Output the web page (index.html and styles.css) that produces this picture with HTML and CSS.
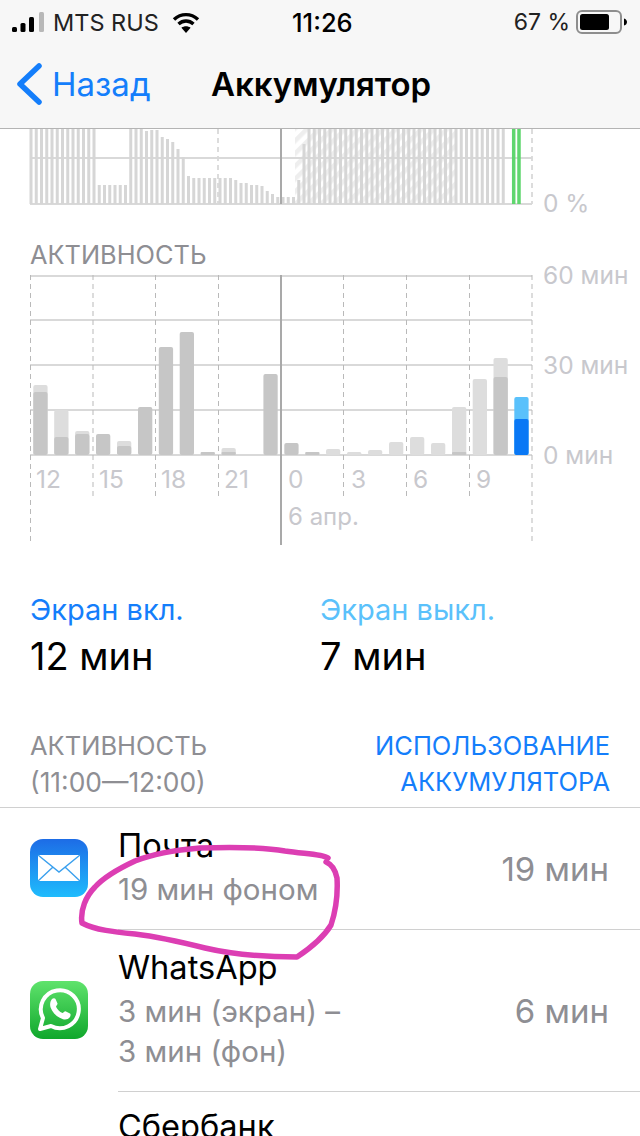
FILE: index.html
```html
<!DOCTYPE html>
<html lang="ru">
<head>
<meta charset="utf-8">
<title>Аккумулятор</title>
<link rel="stylesheet" href="styles.css">
</head>
<body>
<div class="screen">
  <header class="header">
    <div class="status">
      <div class="status-left">
        <svg class="signal" width="33" height="20" viewBox="0 0 33 20"><rect class="sig-on" x="0" y="15" width="5" height="5" rx="1.5"/><rect class="sig-on" x="8.5" y="11" width="5" height="9" rx="1.5"/><rect class="sig-on" x="17" y="5" width="5" height="15" rx="1.5"/><rect class="sig-off" x="27" y="0" width="5" height="20" rx="1.5"/></svg>
        <span class="carrier">MTS RUS</span>
        <svg class="wifi" width="28" height="21" viewBox="0 0 28 21"><path class="wifi-arc" d="M2 7.5C9 1 19 1 26 7.5"/><path class="wifi-arc" d="M6.5 12C11 8 17 8 21.5 12"/><path class="wifi-dot" d="M14 21l-4.6-5.2c2.7-2 6.500-2 9.200 0z"/></svg>
      </div>
      <span class="time">11:26</span>
      <div class="status-right">
        <span class="percent">67 %</span>
        <svg class="battery" width="52" height="24" viewBox="0 0 52 24"><rect class="bat-frame" x="1" y="1" width="44" height="22" rx="5"/><rect class="bat-fill" x="4" y="4" width="29" height="16" rx="2.500"/><path class="bat-nub" d="M48 8.500c2 .5 3 2 3 3.500s-1 3-3 3.500z"/></svg>
      </div>
    </div>
    <nav class="nav">
      <div class="back">
        <svg class="chevron" width="26" height="42" viewBox="0 0 26 42"><path d="M23 3L4 21l19 18"/></svg>
        <span>Назад</span>
      </div>
      <h1 class="nav-title">Аккумулятор</h1>
    </nav>
  </header>

  <svg class="chart chart-battery" width="640" height="91" viewBox="0 129 640 91">
    <defs>
      <pattern id="hatch" width="9" height="9" patternUnits="userSpaceOnUse" patternTransform="rotate(45)"><rect class="hatch-line" width="4.500" height="9"/></pattern>
    </defs>
    <rect x="295" y="129" width="162" height="75" fill="url(#hatch)"/>
    <path class="dash" d="M30.500 129V204M218 129V204M532 129V204"/>
    <path class="grid" d="M30 158H532M30 204H532"/>
    <path class="bars" d="M31 204v-75m5.250 75v-75m5.250 75v-75m5.250 75v-75m5.250 75v-75m5.250 75v-75m5.250 75v-75m5.250 75v-75m5.250 75v-75m5.250 75v-75m5.250 75v-75m5.250 75v-75m5.250 75v-75m5.250 75v-19m5.250 19v-19m5.250 19v-19m5.250 19v-19m5.250 19v-19m5.250 19v-19m5.250 19v-75m5.250 75v-75m5.250 75v-75m5.250 75v-73m5.250 73v-74m5.250 74v-74m5.250 74v-67m5.250 67v-65m5.250 65v-62m5.250 62v-55m5.250 55v-47m5.250 47v-28m5.250 28v-26m5.250 26v-26m5.250 26v-26m5.250 26v-26m5.250 26v-26m5.250 26v-26m5.250 26v-26m5.250 26v-26m5.250 26v-24m5.250 24v-21m5.250 21v-21m5.250 21v-19m5.250 19v-19m5.250 19v-18m5.250 18v-13m5.250 13v-10m5.250 10v-7m5.250 7v-7m5.250 7v-7m5.250 7v-7m5.250 7v-24m5.250 24v-60"/>
    <path class="bars-full" d="M309 204v-75m5.250 75v-75m5.250 75v-75m5.250 75v-75m5.250 75v-75m5.250 75v-75m5.250 75v-75m5.250 75v-75m5.250 75v-75m5.250 75v-75m5.250 75v-75m5.250 75v-75m5.250 75v-75m5.250 75v-75m5.250 75v-75m5.250 75v-75m5.250 75v-75m5.250 75v-75m5.250 75v-75m5.250 75v-75m5.250 75v-75m5.250 75v-75m5.250 75v-75m5.250 75v-75m5.250 75v-75m5.250 75v-75m5.250 75v-75m5.250 75v-75m5.250 75v-75m5.250 75v-75m5.250 75v-75m5.250 75v-75m5.250 75v-75m5.250 75v-75m5.250 75v-75m5.250 75v-75m5.250 75v-75m5.250 75v-75"/>
    <path class="solid" d="M281 129V204"/>
    <path class="bars-green" d="M513.700 204v-75M519 204v-75"/>
    <text class="axis" x="543" y="212">0 %</text>
  </svg>

  <div class="chart-title">АКТИВНОСТЬ</div>

  <svg class="chart chart-activity" width="640" height="271" viewBox="0 275 640 271">
    <path class="grid" d="M30 276H532M30 320H532M30 365H532M30 410H532M30 455H532"/>
    <path class="dash" d="M30.500 275V543M93 275V499M155.500 275V499M218.500 275V499M343.500 275V499M406.500 275V499M469.500 275V499M532 275V543"/>
    <path class="solid" d="M281 275V545"/>
    <g class="light">
      <rect x="33.300" y="385" width="14.300" height="70" rx="2"/>
      <rect x="54.200" y="410" width="14.300" height="45" rx="2"/>
      <rect x="75.100" y="431" width="14.300" height="24" rx="2"/>
      <rect x="117" y="441" width="14.300" height="14" rx="2"/>
      <rect x="221.500" y="448" width="14.300" height="7" rx="2"/>
      <rect x="326" y="449" width="14.300" height="6" rx="2"/>
      <rect x="347" y="452" width="14.300" height="3" rx="1.500"/>
      <rect x="368" y="450" width="14.300" height="5" rx="2"/>
      <rect x="389" y="442" width="14.300" height="13" rx="2"/>
      <rect x="410" y="437" width="14.300" height="18" rx="2"/>
      <rect x="431" y="443" width="14.300" height="12" rx="2"/>
      <rect x="452" y="407" width="14.300" height="48" rx="2"/>
      <rect x="472.700" y="379" width="14.300" height="76" rx="2"/>
      <rect x="493.500" y="358" width="14.300" height="97" rx="2"/>
    </g>
    <g class="dark">
      <rect x="33.300" y="392" width="14.300" height="63" rx="2"/>
      <rect x="54.200" y="437" width="14.300" height="18" rx="2"/>
      <rect x="75.100" y="434" width="14.300" height="21" rx="2"/>
      <rect x="96" y="434" width="14.300" height="21" rx="2"/>
      <rect x="117" y="446" width="14.300" height="9" rx="2"/>
      <rect x="138" y="407" width="14.300" height="48" rx="2"/>
      <rect x="158.800" y="347" width="14.300" height="108" rx="2"/>
      <rect x="179.700" y="332" width="14.300" height="123" rx="2"/>
      <rect x="200.600" y="452" width="14.300" height="3" rx="1"/>
      <rect x="221.500" y="452" width="14.300" height="3" rx="1"/>
      <rect x="263.400" y="374" width="14.300" height="81" rx="2"/>
      <rect x="284.300" y="443" width="14.300" height="12" rx="2"/>
      <rect x="305.200" y="452" width="14.300" height="3" rx="1"/>
      <rect x="452" y="452" width="14.300" height="3" rx="1"/>
      <rect x="493.500" y="377" width="14.300" height="78" rx="2"/>
    </g>
    <rect class="blue-light" x="514.300" y="397" width="14.300" height="58" rx="2"/>
    <rect class="blue-dark" x="514.300" y="419" width="14.300" height="36" rx="2"/>
    <text class="axis" x="543" y="284">60 мин</text>
    <text class="axis" x="543" y="374">30 мин</text>
    <text class="axis" x="543" y="464">0 мин</text>
    <text class="axis" x="36" y="488">12</text>
    <text class="axis" x="99" y="488">15</text>
    <text class="axis" x="161" y="488">18</text>
    <text class="axis" x="224" y="488">21</text>
    <text class="axis" x="288" y="488">0</text>
    <text class="axis" x="351" y="488">3</text>
    <text class="axis" x="413" y="488">6</text>
    <text class="axis" x="476" y="488">9</text>
    <text class="axis axis-small" x="288" y="525">6 апр.</text>
  </svg>

  <section class="stats">
    <div class="stat">
      <div class="stat-label on">Экран вкл.</div>
      <div class="stat-value">12 мин</div>
    </div>
    <div class="stat">
      <div class="stat-label off">Экран выкл.</div>
      <div class="stat-value">7 мин</div>
    </div>
  </section>

  <section class="list-head">
    <div class="list-head-left">АКТИВНОСТЬ<br><span class="range">(11:00—12:00)</span></div>
    <div class="list-head-right">ИСПОЛЬЗОВАНИЕ<br>АККУМУЛЯТОРА</div>
  </section>

  <ul class="apps">
    <li class="app app-mail">
      <svg class="icon" width="58" height="58" viewBox="0 0 58 58">
        <defs><linearGradient id="mailbg" x1="0" y1="0" x2="0" y2="1"><stop offset="0" stop-color="#1d6ce6"/><stop offset="1" stop-color="#1fbcfd"/></linearGradient></defs>
        <rect width="58" height="58" rx="13" fill="url(#mailbg)"/>
        <path class="mail-body" d="M8 16h42v26H8z"/>
        <path class="mail-line" d="M8 16l21 17 21-17M8 42l15-14M50 42L35 28"/>
      </svg>
      <div class="app-body">
        <div class="app-text">
          <div class="app-name">Почта</div>
          <div class="app-sub">19 мин фоном</div>
        </div>
        <div class="app-time">19 мин</div>
      </div>
    </li>
    <li class="app app-whatsapp">
      <svg class="icon" width="58" height="58" viewBox="0 0 58 58">
        <defs><linearGradient id="wabg" x1="0" y1="0" x2="0" y2="1"><stop offset="0" stop-color="#5fe36c"/><stop offset="1" stop-color="#10a72c"/></linearGradient></defs>
        <rect width="58" height="58" rx="13" fill="url(#wabg)"/>
        <path class="wa-ring" d="M10 48l3-11a19 19 0 1 1 8 8z"/>
        <path class="wa-phone" d="M22 18c1-1 3-1 3.500 0l2 4.500c.3.800-1.500 2.500-1.500 3.200 1.500 3 3.500 5 6.500 6.300.8 0 2.200-2 3-1.700l4.500 2.200c1 .5.500 2.500 0 3.500-1.500 2.300-4.500 3-7 2.200-6-1.800-10.500-6.300-12.500-12-.8-3-.3-6 1.500-8.200z"/>
      </svg>
      <div class="app-body">
        <div class="app-text">
          <div class="app-name">WhatsApp</div>
          <div class="app-sub">3 мин (экран) –<br>3 мин (фон)</div>
        </div>
        <div class="app-time">6 мин</div>
      </div>
    </li>
    <li class="app app-sber">
      <div class="icon-space"></div>
      <div class="app-body">
        <div class="app-text">
          <div class="app-name">Сбербанк</div>
        </div>
      </div>
    </li>
  </ul>

  <svg class="scribble" width="640" height="1136" viewBox="0 0 640 1136"><path d="M328 858C322 854 305 854 285 851C262 847 230 847 200 848C175 850 150 855 135 861C120 868 105 876 95 887C86 896 80 910 82 923C95 930 115 932 135 934C160 937 185 943 205 948C235 955 265 957 297 957C312 947 325 935 331 925C336 910 338 895 337 878C335 868 331 864 326 862"/></svg>
</div>
</body>
</html>
```
FILE: styles.css
```css
* { box-sizing: border-box; }
html, body { margin: 0; padding: 0; background: #fff; }
body { font-family: Inter, "Noto Sans", sans-serif; color: #000; }
.screen { position: relative; width: 640px; height: 1136px; overflow: hidden; background: #fff; }

.header { height: 129px; background: #f7f7f7; border-bottom: 1px solid #b4b4b4; }
.status { position: relative; display: flex; align-items: center; justify-content: space-between; height: 44px; padding: 0 12px; font-size: 23.5px; }
.status-left, .status-right { display: flex; align-items: center; }
.carrier { margin-left: 8px; color: #222; }
.wifi { margin-left: 13px; }
.sig-on, .bat-fill, .bat-nub, .wifi-dot { fill: #000; }
.sig-off { fill: #b8b8b8; }
.wifi-arc { fill: none; stroke: #000; stroke-width: 3.4; }
.time { position: absolute; left: 292px; font-size: 25.5px; font-weight: 500; }
.percent { margin-right: 6px; color: #222; font-size: 23px; }
.bat-frame { fill: none; stroke: #8e8e8e; stroke-width: 2; }
.nav { position: relative; display: flex; align-items: center; height: 84px; padding: 0 0 4px 16px; }
.back { display: flex; align-items: center; gap: 10px; color: #147efb; font-size: 33px; }
.chevron path { fill: none; stroke: #147efb; stroke-width: 5.500; stroke-linecap: round; stroke-linejoin: round; }
.nav-title { position: absolute; left: 211px; margin: 0; font-size: 33px; font-weight: 600; }

.chart { display: block; }
.chart-activity { overflow: visible; }
.axis { fill: #c8c8cd; font-size: 24.5px; }
.axis-small { font-size: 24px; }
.grid { fill: none; stroke: #d9d9d9; stroke-width: 2; }
.dash { fill: none; stroke: #b9b9b9; stroke-width: 1; stroke-dasharray: 5 4; }
.solid { fill: none; stroke: #a9a9a9; stroke-width: 2; }
.bars { fill: none; stroke: #d6d6d6; stroke-width: 3; }
.bars-full { fill: none; stroke: #d6d6d6; stroke-width: 3; }
.bars-green { fill: none; stroke: #5fd66e; stroke-width: 3.500; }
.hatch-line { fill: #eeeeee; }
.light rect { fill: #dddddd; }
.dark rect { fill: #c6c6c6; }
.blue-light { fill: #5ac1fb; }
.blue-dark { fill: #0a78f5; }

.chart-title { height: 55px; padding: 20px 0 0 30px; color: #8e8e93; font-size: 25.4px; line-height: 30px; }

.stats { display: flex; height: 182px; padding: 46px 0 0 30px; }
.stat { width: 290px; }
.stat-label { font-size: 29px; line-height: 36px; }
.stat-label.on { color: #147efb; }
.stat-label.off { color: #5ac1fb; }
.stat-value { margin-top: 4px; font-size: 38px; line-height: 48px; }

.list-head { display: flex; justify-content: space-between; height: 79px; padding: 0 30px; font-size: 25.5px; line-height: 36px; }
.list-head-left { color: #8e8e93; }
.range { font-size: 26.4px; }
.list-head-right { color: #147efb; text-align: right; }

.apps { margin: 0; padding: 0; list-style: none; border-top: 1px solid #d0d0d0; }
.app { display: flex; padding-left: 30px; }
.icon { margin-bottom: 2px; }
.icon, .icon-space { flex: none; width: 58px; margin-right: 30px; align-self: center; }
.app-body { display: flex; flex: 1; align-items: center; justify-content: space-between; padding-right: 31px; border-bottom: 1px solid #d0d0d0; }
.app-mail .app-body { height: 122px; }
.app-whatsapp .app-body { height: 162px; }
.app-sber .app-body { height: 120px; border-bottom: 0; align-items: flex-start; padding-top: 14px; }
.app-text { padding-bottom: 4px; }
.app-name { margin-bottom: 4px; font-size: 32.6px; line-height: 40px; }
.app-sub { color: #8e8e93; font-size: 29.5px; line-height: 40px; }
.app-time { color: #8e8e93; font-size: 33px; }
.mail-body { fill: #fff; }
.mail-line { fill: none; stroke: #3aa0ee; stroke-width: 1.400; }
.wa-ring { fill: none; stroke: #fff; stroke-width: 4; stroke-linejoin: round; }
.wa-phone { fill: #fff; }

.scribble { position: absolute; left: 0; top: 0; pointer-events: none; }
.scribble path { fill: none; stroke: #dc3eb3; stroke-width: 5.500; stroke-linecap: round; stroke-linejoin: round; }
```
